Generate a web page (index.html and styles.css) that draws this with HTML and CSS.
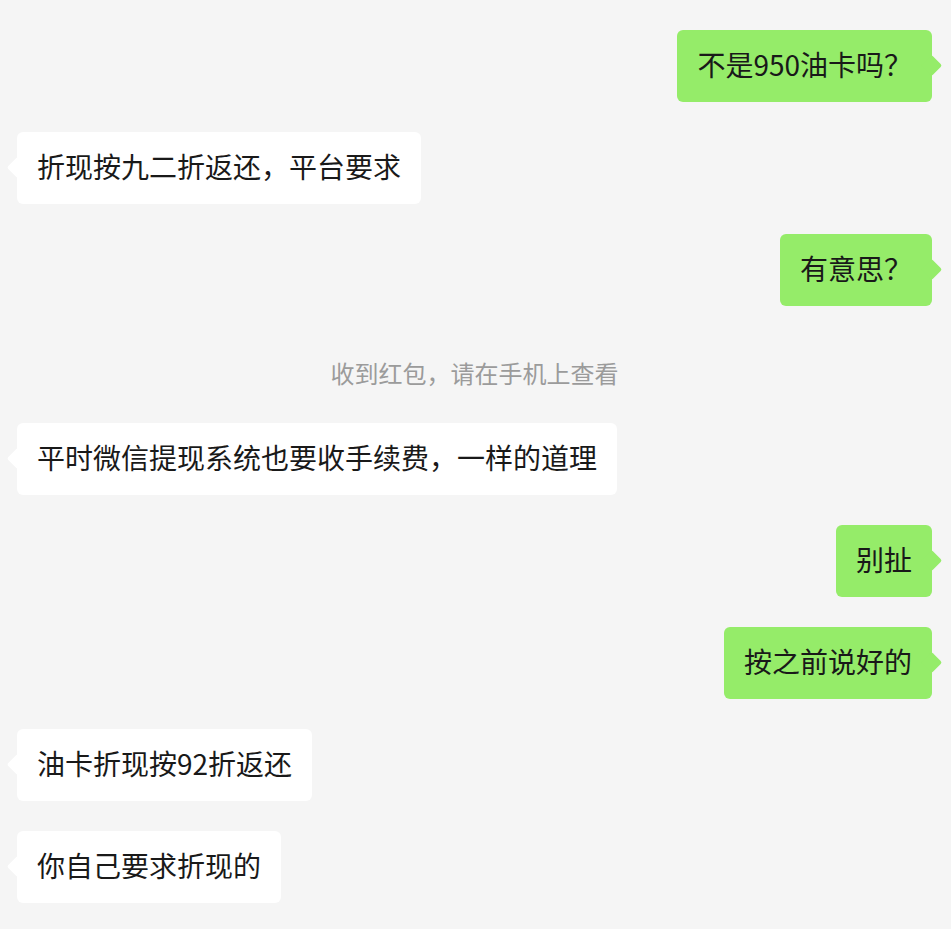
FILE: index.html
```html
<!DOCTYPE html>
<html lang="zh-CN">
<head>
<meta charset="utf-8">
<title>聊天</title>
<link rel="stylesheet" href="styles.css">
</head>
<body>
<div class="chat">
  <div class="row row-me"><div class="bubble bubble-me">不是950油卡吗？</div></div>
  <div class="row row-other"><div class="bubble bubble-other">折现按九二折返还，平台要求</div></div>
  <div class="row row-me"><div class="bubble bubble-me">有意思？</div></div>
  <div class="system">收到红包，请在手机上查看</div>
  <div class="row row-other"><div class="bubble bubble-other">平时微信提现系统也要收手续费，一样的道理</div></div>
  <div class="row row-me"><div class="bubble bubble-me">别扯</div></div>
  <div class="row row-me"><div class="bubble bubble-me">按之前说好的</div></div>
  <div class="row row-other"><div class="bubble bubble-other">油卡折现按92折返还</div></div>
  <div class="row row-other"><div class="bubble bubble-other">你自己要求折现的</div></div>
</div>
</body>
</html>
```
FILE: styles.css
```css
html, body {
  margin: 0;
  padding: 0;
  background: #f5f5f5;
}
body {
  font-family: "Microsoft YaHei", "Noto Sans CJK SC", "Noto Sans", sans-serif;
  color: #191919;
}
.chat {
  display: flex;
  flex-direction: column;
  gap: 30px;
  padding: 30px 19px 26px 17px;
}
.row {
  display: flex;
}
.row-me {
  justify-content: flex-end;
}
.row-other {
  justify-content: flex-start;
}
.bubble {
  position: relative;
  height: 72px;
  box-sizing: border-box;
  padding: 0 20px 4px;
  display: flex;
  align-items: center;
  font-size: 28px;
  line-height: 40px;
  border-radius: 6px;
  white-space: nowrap;
}
.bubble::after {
  content: "";
  position: absolute;
  top: 28px;
  width: 15px;
  height: 15px;
  border-radius: 2px;
  transform: rotate(45deg);
}
.bubble-me {
  background: #95ec69;
}
.bubble-me::after {
  right: -7px;
  background: #95ec69;
}
.bubble-other {
  background: #ffffff;
}
.bubble-other::after {
  left: -7px;
  background: #ffffff;
}
.system {
  margin-top: 19px;
  height: 38px;
  line-height: 36px;
  text-align: center;
  font-size: 24px;
  color: #9b9b9b;
}
```
